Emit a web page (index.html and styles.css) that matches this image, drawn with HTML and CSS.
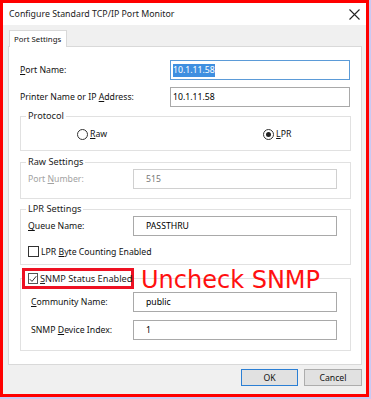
FILE: index.html
```html
<!DOCTYPE html>
<html lang="en">
<head>
	<meta charset="UTF-8">
	<title>Configure Standard TCP/IP Port Monitor</title>
<link rel="stylesheet" href="styles.css">
</head>
<body>
	<div class='window'>
		<div class='titlebar'>
			<span class='title'>Configure Standard TCP/IP Port Monitor</span>
			<svg class='close' width='11' height='11' viewBox='0 0 11 11'><path d='M0.5 0.5L10.5 10.5M10.5 0.5L0.5 10.5' stroke='#222' stroke-width='1.1' fill='none'/></svg>
		</div>
		<div class='body'>
			<div class='tabs'><div class='tab'>Port Settings</div></div>
			<div class='panel'>
				<div class='row top'>
					<span class='label wide'><u>P</u>ort Name:</span>
					<div class='input big focus'><span class='sel'>10.1.11.58</span></div>
				</div>
				<div class='row second'>
					<span class='label wide'>Printer Name or IP <u>A</u>ddress:</span>
					<div class='input big'>10.1.11.58</div>
				</div>

				<fieldset class='group protocol'>
					<legend>Protocol</legend>
					<div class='radios'>
						<span class='opt raw'><span class='radio'></span><span><u>R</u>aw</span></span>
						<span class='opt lpr'><span class='radio on'></span><span><u>L</u>PR</span></span>
					</div>
				</fieldset>

				<fieldset class='group rawset'>
					<legend>Raw Settings</legend>
					<div class='row'>
						<span class='label mid off'>Port <u>N</u>umber:</span>
						<div class='input small off'>515</div>
					</div>
				</fieldset>

				<fieldset class='group lprset'>
					<legend>LPR Settings</legend>
					<div class='row'>
						<span class='label mid'><u>Q</u>ueue Name:</span>
						<div class='input small'>PASSTHRU</div>
					</div>
					<div class='checkrow'><span class='check'></span><span>LPR <u>B</u>yte Counting Enabled</span></div>
				</fieldset>

				<fieldset class='group snmp'>
					<legend><span class='mark'><span class='check'><svg width='8' height='8' viewBox='0 0 8 8'><path d='M0.8 4.2L3 6.4L7.3 1.2' stroke='#333' stroke-width='1' fill='none'/></svg></span><span><u>S</u>NMP Status Enabled</span></span></legend>
					<span class='note'>Uncheck SNMP</span>
					<div class='row'>
						<span class='label mid indent'><u>C</u>ommunity Name:</span>
						<div class='input small'>public</div>
					</div>
					<div class='row second'>
						<span class='label mid indent'>SNMP <u>D</u>evice Index:</span>
						<div class='input small'>1</div>
					</div>
				</fieldset>
			</div>
			<div class='buttons'>
				<div class='btn default'>OK</div>
				<div class='btn'>Cancel</div>
			</div>
		</div>
	</div>
</body>
</html>
```

FILE: styles.css
```css
body{
	margin:0;
	background:#c9c9f3;
	font-family:"Noto Sans","Open Sans",sans-serif;
	font-size:8.7px;
	color:#111;
}
u{
	text-decoration:underline;
	text-underline-offset:1px;
}
.window{
	width:369px;height:397px;
	box-sizing:border-box;
	border:3px solid #ff0000;
	background:#f0f0f0;
	display:flex;
	flex-direction:column;
}
.titlebar{
	height:22px;
	background:#fff;
	display:flex;
	align-items:center;
	padding:0 5px 0 6px;
	font-size:8.8px;
	color:#222;
}
.title{flex:1;}
.close{margin-right:1px;}

.body{
	flex:1;
	display:flex;
	flex-direction:column;
	padding:5px 4px 0 5px;
}
.tabs{
	display:flex;
	padding-left:1px;
}
.tab{
	height:16px;line-height:16px;
	padding:0 5px 0 4px;
	font-size:7.8px;
	background:#fff;
	border:1px solid #d9d9d9;
	border-bottom:none;
	margin-bottom:-1px;
	position:relative;
	z-index:1;
}
.panel{
	height:319px;
	box-sizing:border-box;
	border:1px solid #d9d9d9;
	background:#fff;
	padding:0 10px 0 11px;
	display:flex;
	flex-direction:column;
}
.row{
	display:flex;
	align-items:center;
	height:20px;
}
.row.top{margin-top:13px;}
.row.second{margin-top:7px;}
.label.wide{width:150px;}
.label.mid{width:105px;}
.label.indent{width:102px;padding-left:3px;}
.label.off{color:#a2a2a2;}
.input{
	height:20px;
	box-sizing:border-box;
	border:1px solid #a9a9a9;
	display:flex;
	align-items:center;
	padding-left:2px;
	color:#000;
}
.input.big{width:180px;}
.input.small{width:204px;padding-left:12px;}
.input.focus{border-color:#5b9bd8;}
.input.off{border-color:#d0d0d0;color:#777;}
.sel{
	background:#3f8fe0;
	color:#fff;
	line-height:13px;
}

.group{
	margin:0;
	border:1px solid #e1e1e1;
	padding:0 0 0 7px;
	min-width:0;
}
.group legend{
	padding:0 2px;
	margin-left:-2px;
	line-height:14px;
	font-size:9.2px;
	color:#222;
}
.protocol{margin-top:2px;padding-bottom:9px;}
.radios{
	display:flex;
	margin-top:4px;
	height:14px;
	align-items:center;
}
.opt{
	display:flex;
	align-items:center;
}
.opt.raw{margin-left:49px;}
.opt.lpr{margin-left:156px;}
.radio{
	width:9px;height:9px;
	border:1px solid #333;
	border-radius:50%;
	margin-right:2px;
	background:#fff;
	position:relative;
}
.radio.on::after{
	content:'';
	position:absolute;
	left:2px;top:2px;
	width:5px;height:5px;
	border-radius:50%;
	background:#222;
}
.rawset{margin-top:4px;padding-bottom:9px;}
.lprset{margin-top:3px;padding-bottom:6px;}
.checkrow{
	display:flex;
	align-items:center;
	margin-top:9px;
	height:13px;
}
.check{
	width:9px;height:9px;
	border:1px solid #333;
	margin-right:2px;
	background:#fff;
	display:flex;
	align-items:center;
	justify-content:center;
}
.snmp{
	margin-top:3px;
	padding-bottom:10px;
	position:relative;
}
.snmp legend{
	padding:0;
	margin-left:-6px;
	line-height:normal;
}
.mark{
	display:flex;
	align-items:center;
	width:112px;height:21px;
	box-sizing:border-box;
	border:3px solid #ee1122;
	background:#fff;
	padding-left:3px;
	white-space:nowrap;
}
.mark .check{border-color:#555;}
.note{
	position:absolute;
	left:120px;top:-21px;
	font-family:"DejaVu Sans",sans-serif;
	font-size:24px;
	line-height:24px;
	color:#ff1010;
}
.snmp .row:first-of-type{margin-top:3px;}
.snmp .row.second{margin-top:8px;}

.buttons{
	display:flex;
	justify-content:flex-end;
	gap:6px;
	margin-top:4px;
	padding-right:0;
}
.btn{
	width:57px;height:17px;
	box-sizing:border-box;
	border:1px solid #adadad;
	background:#e1e1e1;
	display:flex;
	align-items:center;
	justify-content:center;
	color:#111;
}
.btn.default{
	border-color:#2b7fd4;
	width:57px;
}
.btn:last-child{width:58px;}
```
